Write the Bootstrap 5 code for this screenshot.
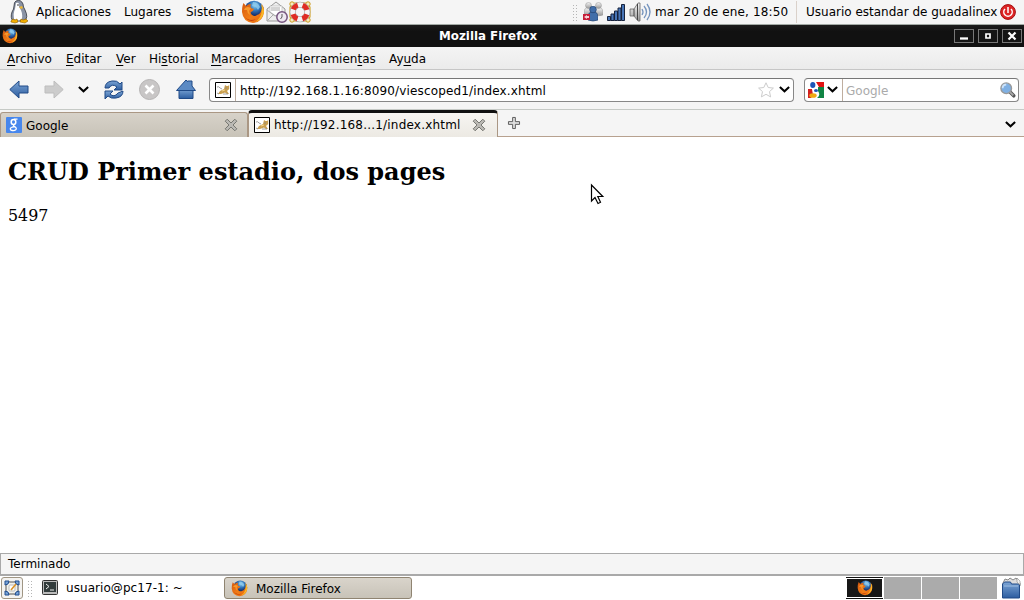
<!DOCTYPE html>
<html lang="es">
<head>
<meta charset="utf-8">
<meta name="viewport" content="width=device-width, initial-scale=1">
<title>Mozilla Firefox</title>
<link href="https://cdn.jsdelivr.net/npm/bootstrap@5.3.0/dist/css/bootstrap.min.css" rel="stylesheet">
<style>
body{width:1024px;height:600px;overflow:hidden;font-family:"DejaVu Sans",sans-serif;font-size:12px;line-height:16px;color:#000;background:#fff}
svg{display:block;flex:none;overflow:visible}
u{text-underline-offset:2px}
.bar{display:grid;align-items:center;white-space:nowrap;flex:none}
.top-panel{height:25px;background:#f5f5f5;border-bottom:1px solid #a3aaa5;grid-template-columns:9px 27px 88px 62px 55px 25px 23px 283px 10px 25px 22px 26px 141px 10px 194px 24px}
.titlebar{height:22px;background:linear-gradient(#1c1c1c,#111 30%,#111);color:#fff;font-weight:bold;font-size:11.85px;grid-template-columns:2px 437px 515px 24px 24px 22px}
.titlebar{line-height:17px}
.menubar{height:23px;padding-top:2px;background:linear-gradient(#f4f4f4,#ebebeb);border-bottom:1px solid #c6c6c6;grid-template-columns:7px 59px 50px 33px 62px 83px 95px 60px}
.toolbar{height:40px;background:#f5f5f5;border-bottom:1px solid #c6cac6;grid-template-columns:9px 35px 34px 26px 35px 37px 33px 585px 10px 215px}
.field{height:24px;background:#fff;border:1px solid #888;border-top-color:#777;border-radius:4px}
.field span{padding-top:2px}
.wide{letter-spacing:.15px}
.wider{letter-spacing:.2px}
.divider{width:1px;height:22px;background:#bfae9f}
.engine{color:#aaa}
.tabs{height:27px;background:#f5f5f5;border-bottom:1px solid #b7a18f}
.tab-item{width:248px;height:25px;margin-top:2px;background:linear-gradient(#d7d2c9,#c8c3b8);border:1px solid #aa9784;border-bottom:0;border-radius:3px 3px 0 0}
.tab-item span{padding-top:1px}
.tab-on{width:250px;height:27px;background:linear-gradient(#f7f5f2,#ece9e3);border-top:3px solid #111;border-left:1px solid #aa9784;border-right:1px solid #aa9784;border-radius:4px 4px 0 0}
.tab-icon{margin:0 4px 0 5px}
.site h2{font:bold 24px/28px "DejaVu Serif",serif;margin:21px 0 0 8px}
.site p{font:15.9px/19px "DejaVu Serif",serif;margin:20px 0 0 8px}
.status{height:23px;background:#f5f5f5;border:1px solid #a9a9a9;border-bottom-width:2px;padding:1px 0 0 7px;line-height:19px}
.taskbar{height:24px;grid-template-columns:1px 26px 15px 24px 158px 188px 434px 155px 22px}
.key{width:22px;height:22px;border:1px solid #a09684;border-radius:3px;background:#f4f3f1}
.task{height:22px;border:1px solid #8f8471;border-radius:3px;background:linear-gradient(#d9d4cb,#c8c3b8)}
.task span{padding-top:1px}
.desk{width:37px;height:22px;background:#ababab}
.desk-on{border:solid #111;border-width:1px 0;background:#171717;box-shadow:inset 0 0 0 1px #fff}
.grip{width:5px;height:17px;background:radial-gradient(circle,#b5b5b5 .7px,transparent 1px) 0 0/3px 3px}
.win{width:20px;height:14px;border:1px solid #777;background:#151515}
.pointer{position:absolute;left:590px;top:184px}
</style>
</head>
<body class="d-flex flex-column">
<svg width="0" height="0" class="position-absolute">
<defs>
<radialGradient id="globe" cx=".55" cy=".25"><stop offset="0" stop-color="#8fd0ee"/><stop offset=".5" stop-color="#3478bd"/><stop offset="1" stop-color="#172e68"/></radialGradient>
<linearGradient id="fire" x1="0" y1="0" x2="1" y2="1"><stop offset="0" stop-color="#d4580f"/><stop offset=".55" stop-color="#f17d17"/><stop offset="1" stop-color="#e8650f"/></linearGradient>
<linearGradient id="blue" x2="0" y2="1"><stop offset="0" stop-color="#7ca5d5"/><stop offset="1" stop-color="#2c5da0"/></linearGradient>
<linearGradient id="grey" x2="0" y2="1"><stop offset="0" stop-color="#f5f5f5"/><stop offset="1" stop-color="#999"/></linearGradient>
<symbol id="fox" viewBox="0 0 24 24"><circle cx="13" cy="10.500" r="9.800" fill="url(#globe)"/><path d="M12 2q5 0 7 5l-2 3-2-3-4-1z" fill="#8fcbee" opacity=".8"/><path d="M2.500 3l2.500 3q2-2 5-2-1 2 0 4l3 1q-.5 2-3 3-1 1 1 3 3 2 5 0 4-1 5-7 1-3-1-5 3 3 3 9-1 10-11 11Q2 22 1 12 1 6 2.500 3z" fill="url(#fire)"/><path d="M20 4q4 5 2.500 10-2 6-8 8 5-4 6-9 1-5-.5-9z" fill="#f9b926"/><path d="M3 10q1-3 4-3l3 1-2 3 1 4q-3-2-3-5z" fill="#f79a2e"/><path d="M3 16q5 6 12 3-6 5-12-3z" fill="#c23e0c"/></symbol>
<symbol id="chev" viewBox="0 0 10 6"><path d="M.8.8L5 4.600 9.200.8" fill="none" stroke="#000" stroke-width="1.900"/></symbol>
<symbol id="cat" viewBox="0 0 16 16"><path d="M.5.5h15v15H.5z" fill="#fff" stroke="#000"/><path d="M3 12l2-3 4-2 1-4 1.500 1H13l1.200-1v4L12 9l2 3h-2l-2-1.500L6 12z" fill="#c99f50"/><path d="M2 5q2-1 3 1l2 1M2 11l2 1M8 12h5M10 6h2" stroke="#888" stroke-width=".8" fill="none"/><path d="M7 9l3-1" stroke="#f2d48a"/></symbol>
<symbol id="close" viewBox="0 0 14 14"><path d="M1.200 3.200l2-2L7 5l3.800-3.800 2 2L9 7l3.800 3.800-2 2L7 9l-3.800 3.800-2-2L5 7z" fill="#bbb9b4" stroke="#777872"/></symbol>
<symbol id="person" viewBox="0 0 10 16"><path d="M0 14q-.5-7 3-8h4q3.500 1 3 8-5 2-10 0z"/><circle cx="5" cy="3.500" r="3.300"/></symbol>
</defs>
</svg>

<header class="bar top-panel">
<i></i>
<svg width="20" height="24" viewBox="0 0 20 24"><path d="M7 1q5-2 7 3 0 3 2 6 4 8-1 11H4q-3-3-1-9 2-3 2-6 0-4 2-5z" fill="#8a93a5" stroke="#30343c" stroke-width=".8"/><path d="M7 3q4-1 3 4 4 5 3 12-4 3-8 0-1-6 1-10z" fill="#fff"/><circle cx="9" cy="5" r=".8" fill="#222"/><path d="M10 7l3-1 1 2-2 1z" fill="#efb72d"/><path d="M2 21l2-2 2 1 2-1 1 3-3 1-4-1zM11 22l1-3 2 1 3-1 2 2-3 2z" fill="#f4b000" stroke="#8c5d00" stroke-width=".6"/></svg>
<span>Aplicaciones</span><span>Lugares</span><span>Sistema</span>
<svg width="24" height="24"><use href="#fox"/></svg>
<svg width="23" height="22" viewBox="0 0 23 22"><path d="M1 8l9-7 9 7v12H1z" fill="#eee" stroke="#999"/><path d="M4 5h12v6l-6 4-6-4z" fill="#fff" stroke="#bbb" stroke-width=".7"/><path d="M5 7h9M5 9h9M1 20l7-7M1 9l8 6 5-2" stroke="#aaa" fill="none"/><circle cx="16" cy="16" r="5.200" fill="#eee8f1" stroke="#75547f" stroke-width="1.500"/><path d="M16 13v3l-1.500 2" stroke="#555" fill="none"/></svg>
<svg width="22" height="22" viewBox="0 0 22 22"><path d="M5 2h12l4 4v10l-4 4H5l-4-4V6z" fill="none" stroke="#d2a62e" stroke-width="1.200"/><g fill="#f8ecc1" stroke="#cc9b20"><circle cx="3" cy="3" r="2.200"/><circle cx="19" cy="3" r="2.200"/><circle cx="3" cy="19" r="2.200"/><circle cx="19" cy="19" r="2.200"/></g><circle cx="11" cy="11" r="7.300" fill="none" stroke="#999" stroke-width="6"/><circle cx="11" cy="11" r="7.300" fill="none" stroke="#f5f5f5" stroke-width="5"/><circle cx="11" cy="11" r="7.300" fill="none" stroke="#df2c24" stroke-width="5" stroke-dasharray="6.500 4.966" stroke-dashoffset="-2.500"/></svg>
<i class="grip"></i>
<svg width="22" height="20" viewBox="0 0 22 20"><g fill="url(#grey)" stroke="#999" stroke-width=".6"><use href="#person" x="2" y="0" width="9" height="15"/><use href="#person" x="12" y="0" width="9" height="15"/></g><g fill="#416ea9" stroke="#234471" stroke-width=".7"><use href="#person" x="6" y="4" width="10" height="16"/></g><path d="M1 12h7v6H1z" fill="#c51d38"/><path d="M2 15l3-2v1h2v2H5v1z" fill="#fff" opacity=".8"/></svg>
<svg width="18" height="17" viewBox="0 0 18 17" fill="#4775b7" stroke="#17233c"><path d="M.5 12.500h3v4h-3zM4 10h3v6.500H4zM7.500 7h3v9.500h-3zM11 4h3v12.500h-3zM14.500.5h3v16h-3z"/></svg>
<svg width="22" height="20" viewBox="0 0 22 20"><path d="M1 7h4l4-6h2v18H9l-4-5H1z" fill="url(#grey)" stroke="#666" stroke-width=".8"/><path d="M5 7v7M8.500 2v16" stroke="#444"/><path d="M13 7q2 3 0 6M15 4q5 6 0 12M18 2q6 8 0 16" fill="none" stroke="#7594bd" stroke-width="1.300"/></svg>
<span class="wide">mar 20 de ene, 18:50</span>
<i class="divider opacity-50"></i>
<span>Usuario estandar de guadalinex</span>
<svg width="16" height="16" viewBox="0 0 16 16"><circle cx="8" cy="8" r="7.400" fill="#dd2525" stroke="#a50d0d"/><path d="M5 5a4.200 4.200 0 1 0 6 0M8 3v6" fill="none" stroke="#fff" stroke-width="1.500"/></svg>
</header>

<div class="bar titlebar">
<i></i><svg width="16" height="16"><use href="#fox"/></svg><span>Mozilla Firefox</span>
<span class="win"><svg width="18" height="12"><path d="M5 8.500h8" stroke="#fff" stroke-width="2.300"/></svg></span>
<span class="win"><svg width="18" height="12"><path d="M7 4h4v4H7z" stroke="#fff" stroke-width="1.700" fill="none"/></svg></span>
<span class="win"><svg width="18" height="12"><path d="M5.500 2.500l7 7M12.500 2.500l-7 7" stroke="#fff" stroke-width="2.200"/></svg></span>
</div>

<nav class="bar menubar">
<i></i><span><u>A</u>rchivo</span><span><u>E</u>ditar</span><span><u>V</u>er</span><span>Hi<u>s</u>torial</span><span><u>M</u>arcadores</span><span>Herramien<u>t</u>as</span><span>Ay<u>u</u>da</span>
</nav>

<div class="bar toolbar">
<i></i>
<svg width="20" height="20" viewBox="0 0 20 20"><path d="M.8 9.500L10 1v5h9v7h-9v5z" fill="url(#blue)" stroke="#204a87"/></svg>
<svg width="20" height="20" viewBox="0 0 20 20"><path d="M19.200 9.500L10 1v5H1v7h9v5z" fill="#ccc" stroke="#bdbdbd"/></svg>
<svg width="11" height="7"><use href="#chev"/></svg>
<svg width="20" height="20" viewBox="0 0 20 20" fill="url(#blue)" stroke="#204a87"><path d="M1 8q0-6 7-7 5-1 8 3l2-2v8h-8l3-3Q8 3 5 8z"/><path d="M19 11q0 6-7 7-5 1-8-2l-3 3v-8h8l-3 3q4 4 8-1z"/></svg>
<svg width="21" height="21" viewBox="0 0 21 21"><circle cx="10.500" cy="10.500" r="10" fill="#c8c6c6" stroke="#b5b3b3"/><path d="M6.500 6.500l8 8M14.500 6.500l-8 8" stroke="#fff" stroke-width="2.600"/></svg>
<svg width="20" height="21" viewBox="0 0 20 21"><path d="M3 10v9.500h14V10" fill="url(#blue)" stroke="#204a87"/><path d="M.5 11.500L10 1l1.500 1.500V2H16v5l3.500 4.500z" fill="#5b8ac4" stroke="#204a87"/></svg>
<div class="field d-flex align-items-center">
<svg width="16" height="16" style="margin:0 4px 0 5px"><use href="#cat"/></svg><i class="divider"></i><span class="wide" style="margin-left:4px">http://192.168.1.16:8090/viescoped1/index.xhtml</span>
<svg width="16" height="16" viewBox="0 0 16 16" class="ms-auto"><path d="M8 .8l2.200 4.700 5.200.6-3.900 3.500 1.100 5.300L8 12.300l-4.600 2.600 1.100-5.300L.6 6.100l5.200-.6z" fill="#fff" stroke="#ccc"/></svg>
<svg width="11" height="7" style="margin:0 3px 0 5px"><use href="#chev"/></svg>
</div><i></i>
<div class="field d-flex align-items-center">
<svg width="16" height="16" viewBox="0 0 16 16" style="margin-left:3px"><path d="M8 0h8v5h-5z" fill="#e11212"/><path d="M10 5h6v11H9q4-3 1-7z" fill="#118544"/><path d="M0 7h4l1 6-2 3H0z" fill="#d22020"/><path d="M4 6l5 1 1 5H6z" fill="#fff"/><ellipse cx="4.800" cy="3" rx="2.600" ry="3" fill="#1c55b7"/><ellipse cx="8" cy="8.500" rx="2" ry="1.600" fill="#1d55b4"/><ellipse cx="5" cy="13.500" rx="3.700" ry="2.300" fill="#f1aa11"/></svg>
<svg width="11" height="7" style="margin:0 4px 0 3px"><use href="#chev"/></svg><i class="divider"></i><span class="engine" style="margin-left:3px">Google</span>
<svg width="16" height="16" viewBox="0 0 18 18" class="ms-auto" style="margin-right:2px"><path d="M11 11l4.500 4.500" stroke="#555" stroke-width="4" stroke-linecap="round"/><path d="M11 11l4 4" stroke="#aaa" stroke-width="2"/><circle cx="7" cy="7" r="6" fill="#7fb0e3" stroke="#999" stroke-width="1.500"/><path d="M3 7q0-4 4-4" stroke="#cce3fa" stroke-width="2" fill="none"/></svg>
</div>
</div>

<div class="tabs d-flex">
<div class="tab-item d-flex align-items-center"><svg width="16" height="16" viewBox="0 0 16 16" class="tab-icon"><rect width="16" height="16" rx="1" fill="#4787ed"/><g fill="none" stroke="#fff"><ellipse cx="7.500" cy="5" rx="2.300" ry="2.500" stroke-width="1.500"/><path d="M8 2.200h3.500M8.500 7.500q-2 1 0 2 2.500 1.500 1.500 3-2 2-5 .7-2-2 1.500-3.200l2-.3" stroke-width="1.300"/></g></svg><span>Google</span><svg width="14" height="14" class="ms-auto" style="margin-right:9px"><use href="#close"/></svg></div>
<div class="tab-on d-flex align-items-center"><svg width="16" height="16" class="tab-icon"><use href="#cat"/></svg><span class="wider">http://192.168...1/index.xhtml</span><svg width="14" height="14" class="ms-auto" style="margin-right:11px"><use href="#close"/></svg></div>
<svg width="12" height="12" viewBox="0 0 13 13" style="margin:7px 0 0 10px"><path d="M5 .5h3V5h4.500v3H8v4.500H5V8H.5V5H5z" fill="#ddd" stroke="#555"/></svg>
<svg width="11" height="7" class="ms-auto" style="margin:11px 8px 0 0"><use href="#chev"/></svg>
</div>

<main class="site flex-grow-1 overflow-hidden"><h2>CRUD Primer estadio, dos pages</h2><p>5497</p></main>

<div class="status flex-shrink-0">Terminado</div>

<footer class="bar taskbar">
<i></i>
<span class="key d-flex align-items-center justify-content-center"><svg width="16" height="16" viewBox="0 0 16 16"><path d="M2 2h12v12H2z" fill="#f2f2ed" stroke="#555"/><path d="M1 5V1h4L4 4zM11 1h4v4l-3-1zM1 11v4h4l-1-3zM15 11v4h-4l1-3z" fill="#76a2d7" stroke="#234f8f"/><rect x="5" y="5" width="6" height="6" rx="1" fill="#fff" stroke="#bbb"/><path d="M7 10l5-6" stroke="#dc9225" stroke-width="1.600"/></svg></span>
<i class="grip"></i>
<svg width="16" height="16" viewBox="0 0 16 16"><rect x=".5" y=".5" width="15" height="14" rx="1" fill="#bbb" stroke="#333"/><path d="M2 2h12v10H2z" fill="#333d3d"/><path d="M4 4l3 2.500L4 9M8 10h4" stroke="#eee" fill="none"/></svg>
<span style="letter-spacing:.06px">usuario@pc17-1: ~</span>
<span class="task d-flex align-items-center"><svg width="17" height="17" style="margin:0 8px 0 6px"><use href="#fox"/></svg><span>Mozilla Firefox</span></span>
<i></i>
<span class="d-flex" style="gap:1px"><span class="desk desk-on d-flex align-items-center justify-content-center"><svg width="16" height="16"><use href="#fox"/></svg></span><i class="desk"></i><i class="desk"></i><i class="desk"></i></span>
<svg width="20" height="22" viewBox="0 0 20 22"><path d="M2 6l2-4 3 1 2-2 3 2 3-2 4 5v3H2z" fill="#ddd" stroke="#888"/><path d="M1.500 9V7l2-2h6l1 2h8v14h-17z" fill="url(#blue)" stroke="#204a87"/><path d="M16 1l3 3v4l-3-3z" fill="#eee" stroke="#888" stroke-width=".6"/><path d="M3 9h14" stroke="#9dbde1"/></svg>
</footer>

<svg class="pointer" width="14" height="22" viewBox="0 0 14 22"><path d="M1.500 1v16l3.500-3.500 3 6 2.500-1.200-2.700-5.800h5z" fill="#fff" stroke="#000" stroke-width="1.200"/></svg>
<script src="https://cdn.jsdelivr.net/npm/bootstrap@5.3.0/dist/js/bootstrap.bundle.min.js"></script>
</body>
</html>
